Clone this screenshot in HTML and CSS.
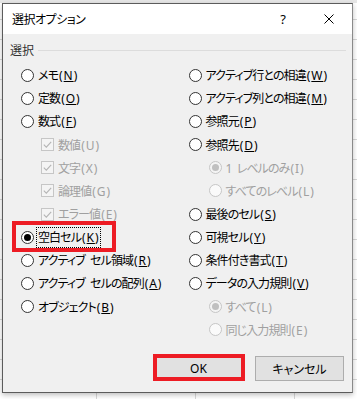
FILE: index.html
```html
<!DOCTYPE html>
<html lang="ja">

<head>
    <meta charset="UTF-8">
    <title>選択オプション</title>
    <link rel="stylesheet" href="styles.css">
</head>

<body>
    <div class="dialog">
        <!-- Title bar -->
        <div class="titlebar">
            <span class="title">選択オプション</span>
            <span class="tb-btn">?</span>
            <span class="tb-btn">
                <svg width="10" height="10" viewBox="0 0 10 10">
                    <path d="M0.5 0.5 L9.5 9.5 M9.5 0.5 L0.5 9.5" stroke="#000" stroke-width="1" fill="none" />
                </svg>
            </span>
        </div>

        <div class="content">
            <div class="group-label">
                <span>選択</span>
                <span class="rule"></span>
            </div>

            <div class="columns">
                <!-- Left column -->
                <div class="col">
                    <div class="opt"><span class="radio"></span><span class="lbl">メモ<span class="key">(<u>N</u>)</span></span></div>
                    <div class="opt"><span class="radio"></span><span class="lbl">定数<span class="key">(<u>O</u>)</span></span></div>
                    <div class="opt"><span class="radio"></span><span class="lbl">数式<span class="key">(<u>F</u>)</span></span></div>
                    <div class="opt sub disabled"><span class="check"><svg width="13" height="13" viewBox="0 0 13 13"><rect x="0.5" y="0.5" width="12" height="12" fill="#f4f4f4" stroke="#c6c6c6" /><path d="M2.8 6.6 L5.3 9.1 L10.2 3.8" stroke="#b4b4b4" stroke-width="1.1" fill="none" /></svg></span><span class="lbl">数値<span class="key">(U)</span></span></div>
                    <div class="opt sub disabled"><span class="check"><svg width="13" height="13" viewBox="0 0 13 13"><rect x="0.5" y="0.5" width="12" height="12" fill="#f4f4f4" stroke="#c6c6c6" /><path d="M2.8 6.6 L5.3 9.1 L10.2 3.8" stroke="#b4b4b4" stroke-width="1.1" fill="none" /></svg></span><span class="lbl">文字<span class="key">(X)</span></span></div>
                    <div class="opt sub disabled"><span class="check"><svg width="13" height="13" viewBox="0 0 13 13"><rect x="0.5" y="0.5" width="12" height="12" fill="#f4f4f4" stroke="#c6c6c6" /><path d="M2.8 6.6 L5.3 9.1 L10.2 3.8" stroke="#b4b4b4" stroke-width="1.1" fill="none" /></svg></span><span class="lbl">論理値<span class="key">(G)</span></span></div>
                    <div class="opt sub disabled"><span class="check"><svg width="13" height="13" viewBox="0 0 13 13"><rect x="0.5" y="0.5" width="12" height="12" fill="#f4f4f4" stroke="#c6c6c6" /><path d="M2.8 6.6 L5.3 9.1 L10.2 3.8" stroke="#b4b4b4" stroke-width="1.1" fill="none" /></svg></span><span class="lbl">エラー値<span class="key">(E)</span></span></div>
                    <div class="opt marked"><span class="radio checked"></span><span class="lbl focus">空白セル<span class="key">(<u>K</u>)</span></span><span class="red-box"></span></div>
                    <div class="opt"><span class="radio"></span><span class="lbl">アクティブ&nbsp;セル領域<span class="key">(<u>R</u>)</span></span></div>
                    <div class="opt"><span class="radio"></span><span class="lbl">アクティブ&nbsp;セルの配列<span class="key">(<u>A</u>)</span></span></div>
                    <div class="opt"><span class="radio"></span><span class="lbl">オブジェクト<span class="key">(<u>B</u>)</span></span></div>
                </div>

                <!-- Right column -->
                <div class="col">
                    <div class="opt"><span class="radio"></span><span class="lbl">アクティブ行との相違<span class="key">(<u>W</u>)</span></span></div>
                    <div class="opt"><span class="radio"></span><span class="lbl">アクティブ列との相違<span class="key">(<u>M</u>)</span></span></div>
                    <div class="opt"><span class="radio"></span><span class="lbl">参照元<span class="key">(<u>P</u>)</span></span></div>
                    <div class="opt"><span class="radio"></span><span class="lbl">参照先<span class="key">(<u>D</u>)</span></span></div>
                    <div class="opt sub disabled"><span class="radio checked"></span><span class="lbl">1&nbsp;レベルのみ<span class="key">(I)</span></span></div>
                    <div class="opt sub disabled"><span class="radio"></span><span class="lbl">すべてのレベル<span class="key">(L)</span></span></div>
                    <div class="opt"><span class="radio"></span><span class="lbl">最後のセル<span class="key">(<u>S</u>)</span></span></div>
                    <div class="opt"><span class="radio"></span><span class="lbl">可視セル<span class="key">(<u>Y</u>)</span></span></div>
                    <div class="opt"><span class="radio"></span><span class="lbl">条件付き書式<span class="key">(<u>T</u>)</span></span></div>
                    <div class="opt"><span class="radio"></span><span class="lbl">データの入力規則<span class="key">(<u>V</u>)</span></span></div>
                    <div class="opt sub disabled"><span class="radio checked"></span><span class="lbl">すべて<span class="key">(L)</span></span></div>
                    <div class="opt sub disabled"><span class="radio"></span><span class="lbl">同じ入力規則<span class="key">(E)</span></span></div>
                </div>
            </div>

            <div class="buttons">
                <div class="btn ok">OK<span class="red-box"></span></div>
                <div class="btn">キャンセル</div>
            </div>
        </div>
    </div>
</body>

</html>
```

FILE: styles.css
```css
html,
body {
    margin: 0;
    padding: 0;
}

body {
    width: 357px;
    height: 399px;
    overflow: hidden;
    font-family: "Noto Sans", "Noto Sans CJK JP", sans-serif;
    font-size: 12px;
    color: #000;
    background-color: #ffffff;
    background-image:
        linear-gradient(to bottom, #e6e6e6 0, #e6e6e6 3px, transparent 3px),
        repeating-linear-gradient(to right, transparent 0, transparent 96px, #d8d8d8 96px, #d8d8d8 97px, transparent 97px, transparent 99px),
        repeating-linear-gradient(to bottom, transparent 0, transparent 19px, #d8d8d8 19px, #d8d8d8 20px);
    font-feature-settings: "palt";
}

.dialog {
    margin: 3px 0 0 2px;
    width: 351px;
    height: 390px;
    box-sizing: border-box;
    border: 1px solid #5c5c5c;
    border-right-color: #8a8a8a;
    background-color: #f0f0f0;
    box-shadow: 0 2px 5px rgba(0, 0, 0, 0.25);
    display: flex;
    flex-direction: column;
}

/* title bar */
.titlebar {
    height: 30px;
    background-color: #ffffff;
    display: flex;
    align-items: center;
}

.title {
    flex: 1;
    padding-left: 9px;
    font-size: 12px;
    letter-spacing: -0.5px;
}

.tb-btn {
    width: 46px;
    height: 30px;
    display: flex;
    align-items: center;
    justify-content: center;
    font-size: 13px;
}

/* content */
.content {
    flex: 1;
    padding: 0 8px 0 7px;
}

.group-label {
    display: flex;
    align-items: center;
    height: 16px;
    margin-top: 8px;
    color: #333;
}

.rule {
    flex: 1;
    height: 1px;
    margin-left: 4px;
    margin-right: -2px;
    background-color: #dcdcdc;
}

.columns {
    display: grid;
    grid-template-columns: 167.5px 1fr;
    padding-left: 11px;
    margin-top: 5.6px;
}

.opt {
    position: relative;
    height: 23.15px;
    display: flex;
    align-items: center;
    gap: 4px;
    white-space: nowrap;
}

.opt.sub {
    padding-left: 20px;
}

.lbl {
    letter-spacing: -0.9px;
    word-spacing: 3px;
}

.key {
    margin-left: 1px;
    letter-spacing: 0.9px;
}

.disabled {
    color: #a0a0a0;
}

.radio {
    width: 13px;
    height: 13px;
    box-sizing: border-box;
    border: 1px solid #333;
    border-radius: 50%;
    background-color: #ffffff;
    display: flex;
    align-items: center;
    justify-content: center;
    flex-shrink: 0;
}

.radio.checked::after {
    content: "";
    width: 7px;
    height: 7px;
    border-radius: 50%;
    background-color: #000;
}

.disabled .radio {
    border-color: #c6c6c6;
    background-color: #fafafa;
}

.disabled .radio.checked {
    background-color: #f4f4f4;
}

.disabled .radio.checked::after {
    background-color: #c0c0c0;
}

.check {
    width: 13px;
    height: 13px;
    display: flex;
}

.focus {
    display: inline-block;
    line-height: 17px;
    outline: 1px dotted #000;
    outline-offset: 1px;
}

/* red highlight frames */
.red-box {
    position: absolute;
    border: 4px solid #ed1c24;
    pointer-events: none;
}

.marked .red-box {
    left: -9px;
    top: -4.6px;
    width: 96px;
    height: 23px;
}

/* buttons */
.buttons {
    display: flex;
    justify-content: flex-end;
    gap: 12px;
    margin-top: 15px;
}

.btn {
    position: relative;
    width: 89px;
    height: 25px;
    box-sizing: border-box;
    border: 1px solid #adadad;
    background-color: #e1e1e1;
    display: flex;
    align-items: center;
    justify-content: center;
}

.ok .red-box {
    left: -2px;
    top: -3px;
    width: 84px;
    height: 19px;
}
```
